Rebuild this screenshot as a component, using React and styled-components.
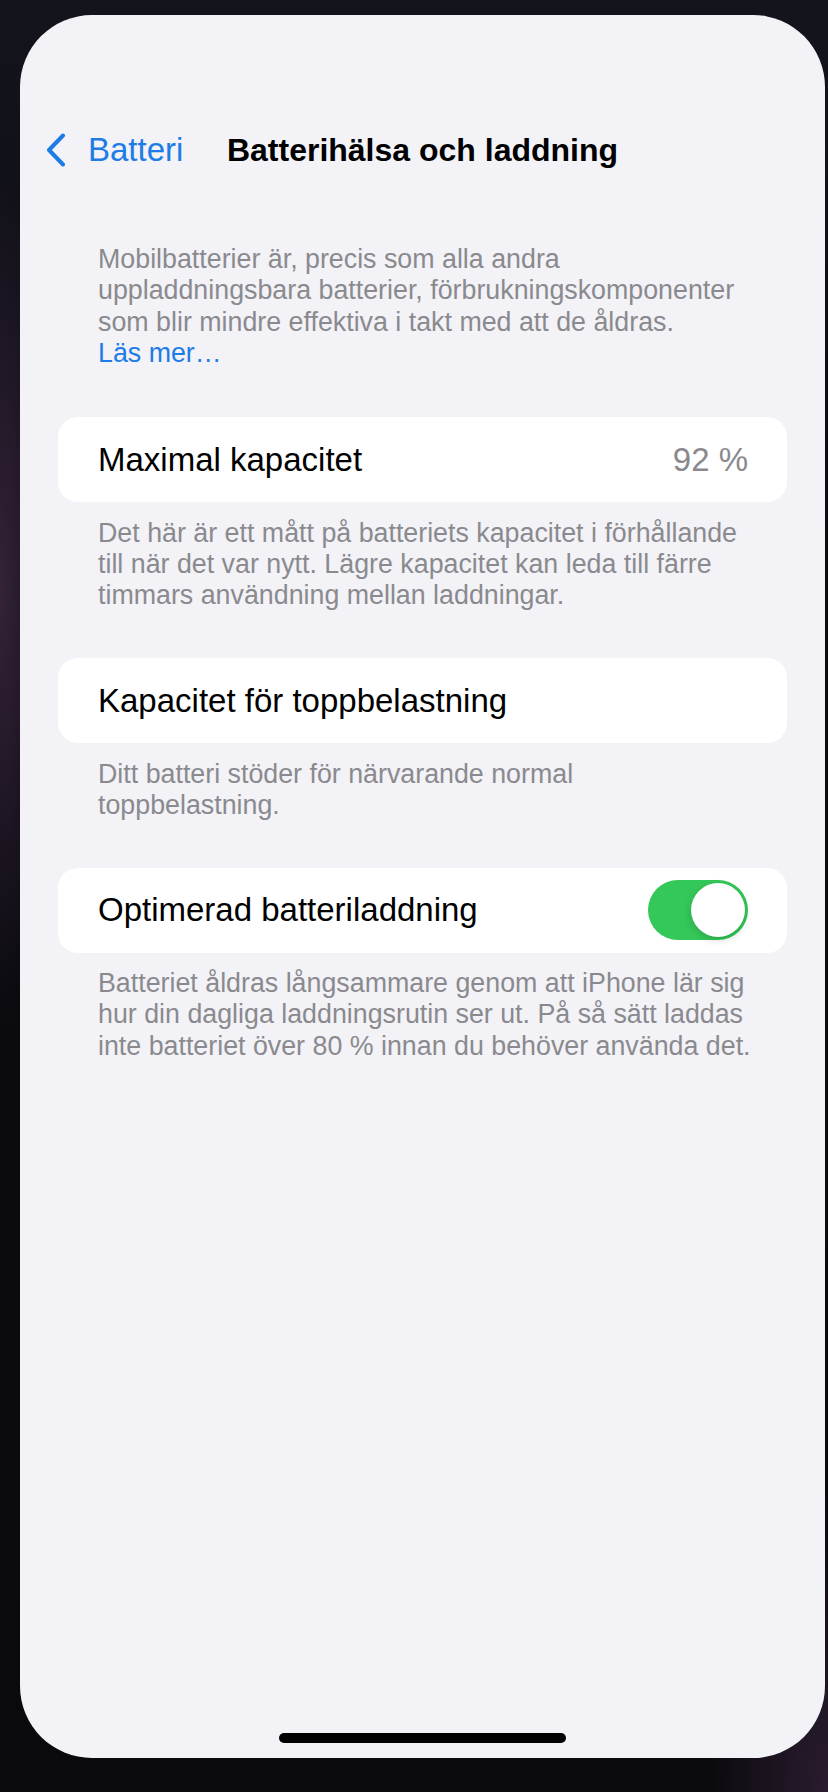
import React from "react";
import styled, { createGlobalStyle } from "styled-components";

const GlobalStyle = createGlobalStyle`
  html, body {
    margin: 0;
    padding: 0;
  }
  body {
    background:
      radial-gradient(ellipse 60px 420px at 0% 33%, #35233a 0%, rgba(53,35,58,0) 100%),
      radial-gradient(ellipse 120px 300px at 100% 100%, #2a1c2e 0%, rgba(42,28,46,0) 100%),
      linear-gradient(180deg, #14141d 0%, #0b0b10 30%, #0a0a0e 100%);
    font-family: "Liberation Sans", Arial, sans-serif;
    -webkit-font-smoothing: antialiased;
  }
`;

const Page = styled.div`
  box-sizing: border-box;
  min-height: 1792px;
  padding: 15px 3px 34px 20px;
`;

const Screen = styled.div`
  width: 805px;
  height: 1743px;
  border-radius: 72px;
  background: #f2f2f7;
  display: flex;
  flex-direction: column;
  overflow: hidden;
`;

const Nav = styled.header`
  display: grid;
  grid-template-columns: 1fr auto 1fr;
  align-items: center;
  height: 54px;
  margin-top: 108px;
  padding: 0 26px;
`;

const BackButton = styled.button`
  justify-self: start;
  display: flex;
  align-items: center;
  gap: 22px;
  padding: 0;
  border: none;
  background: none;
  color: #1d7ce6;
  font-family: inherit;
  font-size: 33px;
  cursor: pointer;
`;

const Title = styled.h1`
  margin: 0;
  font-size: 32px;
  font-weight: 700;
  color: #000;
  white-space: nowrap;
`;

const Footnote = styled.p`
  margin: 0;
  font-size: 26.8px;
  line-height: 31.3px;
  color: #8a8a8e;
  white-space: nowrap;
`;

const Intro = styled(Footnote)`
  margin-top: 67px;
  padding: 0 78px;
`;

const Link = styled.a`
  color: #1d7ce6;
  text-decoration: none;
`;

const Group = styled.section`
  margin: ${(p) => p.$top}px 38px 0;
`;

const Card = styled.div`
  height: 85px;
  display: flex;
  align-items: center;
  justify-content: space-between;
  padding: 0 39px 0 40px;
  background: #fff;
  border-radius: 20px;
  font-size: 33px;
  color: #000;
`;

const Value = styled.span`
  color: #8a8a8e;
`;

const GroupFooter = styled(Footnote)`
  padding: 15.5px 40px 0;
`;

const Switch = styled.div`
  position: relative;
  width: 100px;
  height: 60px;
  border-radius: 30px;
  background: ${(p) => (p.$on ? "#34c759" : "#e9e9eb")};
`;

const Knob = styled.div`
  position: absolute;
  top: 3px;
  left: ${(p) => (p.$on ? "43px" : "3px")};
  width: 54px;
  height: 54px;
  border-radius: 50%;
  background: #fff;
  box-shadow: 0 3px 8px rgba(0, 0, 0, 0.15), 0 1px 1px rgba(0, 0, 0, 0.06);
`;

const Spacer = styled.div`
  flex: 1;
`;

const HomeBar = styled.div`
  width: 287px;
  height: 10px;
  margin: 0 auto 15px;
  border-radius: 5px;
  background: #000;
`;

const Chevron = () => (
  <svg width="20" height="34" viewBox="0 0 20 34" fill="none">
    <path
      d="M17 2.5 L3 17 L17 31.5"
      stroke="currentColor"
      strokeWidth="4"
      strokeLinecap="round"
      strokeLinejoin="round"
    />
  </svg>
);

const lines = (arr) =>
  arr.map((l, i) => (
    <React.Fragment key={i}>
      {i > 0 && <br />}
      {l}
    </React.Fragment>
  ));

export default function App() {
  return (
    <Page>
      <GlobalStyle />
      <Screen>
        <Nav>
          <BackButton>
            <Chevron />
            Batteri
          </BackButton>
          <Title>Batterihälsa och laddning</Title>
          <span />
        </Nav>

        <Intro>
          {lines([
            "Mobilbatterier är, precis som alla andra",
            "uppladdningsbara batterier, förbrukningskomponenter",
            "som blir mindre effektiva i takt med att de åldras.",
          ])}
          <br />
          <Link href="#">Läs mer…</Link>
        </Intro>

        <Group $top={48}>
          <Card>
            Maximal kapacitet
            <Value>92 %</Value>
          </Card>
          <GroupFooter>
            {lines([
              "Det här är ett mått på batteriets kapacitet i förhållande",
              "till när det var nytt. Lägre kapacitet kan leda till färre",
              "timmars användning mellan laddningar.",
            ])}
          </GroupFooter>
        </Group>

        <Group $top={46.5}>
          <Card>Kapacitet för toppbelastning</Card>
          <GroupFooter>
            {lines(["Ditt batteri stöder för närvarande normal", "toppbelastning."])}
          </GroupFooter>
        </Group>

        <Group $top={46.5}>
          <Card>
            Optimerad batteriladdning
            <Switch $on>
              <Knob $on />
            </Switch>
          </Card>
          <GroupFooter>
            {lines([
              "Batteriet åldras långsammare genom att iPhone lär sig",
              "hur din dagliga laddningsrutin ser ut. På så sätt laddas",
              "inte batteriet över 80 % innan du behöver använda det.",
            ])}
          </GroupFooter>
        </Group>

        <Spacer />
        <HomeBar />
      </Screen>
    </Page>
  );
}
